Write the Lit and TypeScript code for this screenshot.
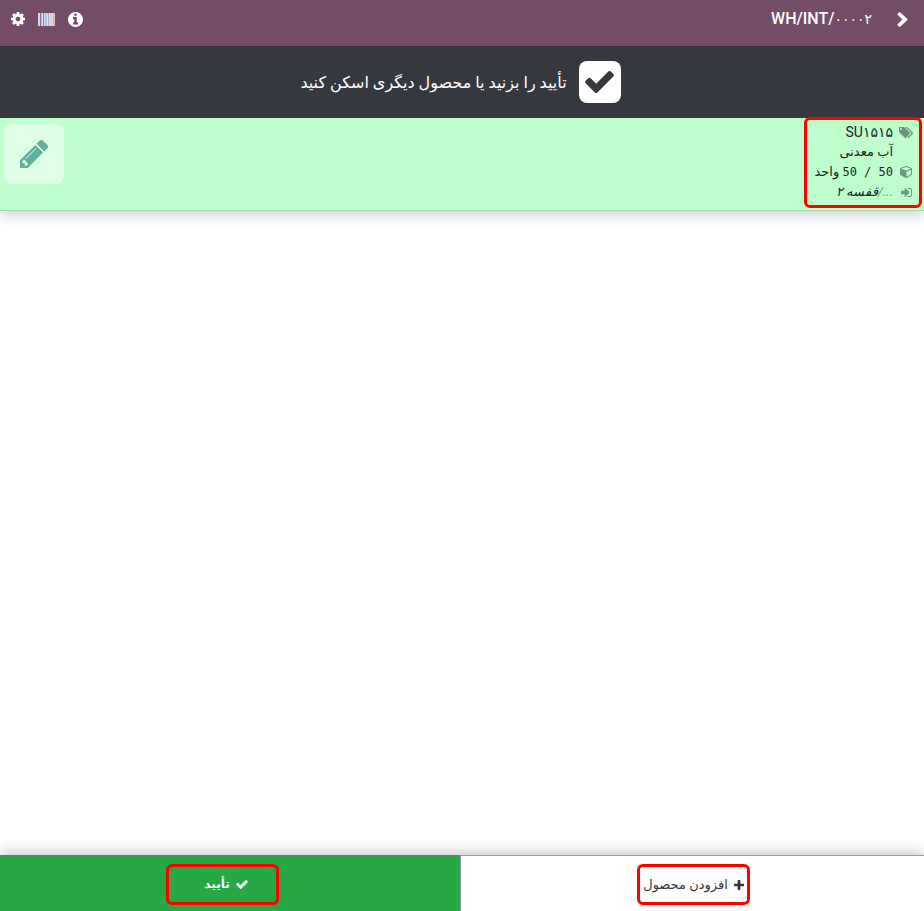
import { LitElement, html, svg, css } from "lit";
import { customElement, property } from "lit/decorators.js";

type Glyph = { box: string; d: string };

const GLYPHS: Record<string, Glyph> = {
  check: {
    box: "121 334 1550 1188",
    d: "M1671 566q0 40-28 68l-724 724-136 136q-28 28-68 28t-68-28l-136-136-362-362q-28-28-28-68t28-68l136-136q28-28 68-28t68 28l294 295 656-657q28-28 68-28t68 28l136 136q28 28 28 68z",
  },
  plus: {
    box: "192 128 1408 1408",
    d: "M1600 736v192q0 40-28 68t-68 28h-416v416q0 40-28 68t-68 28h-192q-40 0-68-28t-28-68v-416h-416q-40 0-68-28t-28-68v-192q0-40 28-68t68-28h416v-416q0-40 28-68t68-28h192q40 0 68 28t28 68v416h416q40 0 68 28t28 68z",
  },
  pencil: {
    box: "128 149 1515 1515",
    d: "M491 1536l91-91-235-235-91 91v107h128v128h107zm523-928q0-22-22-22-10 0-17 7l-542 542q-7 7-7 17 0 22 22 22 10 0 17-7l542-542q7-7 7-17zm-54-192l416 416-832 832h-416v-416zm683 96q0 53-37 90l-166 166-416-416 166-165q36-38 90-38 53 0 91 38l235 234q37 39 37 91z",
  },
  cog: {
    box: "128 128 1536 1536",
    d: "M1152 896q0-106-75-181t-181-75-181 75-75 181 75 181 181 75 181-75 75-181zm512-109v222q0 12-8 23t-20 13l-185 28q-19 54-39 91 35 50 107 138 10 12 10 25t-9 23q-27 37-99 108t-94 71q-12 0-26-9l-138-108q-44 23-91 38-16 136-29 186-7 28-36 28h-222q-14 0-24.500-8.500t-11.500-21.500l-28-184q-49-16-90-37l-141 107q-10 9-25 9-14 0-25-11-126-114-165-168-7-10-7-23 0-12 8-23 15-21 51-66.500t54-70.500q-27-50-41-99l-183-27q-13-2-21-12.500t-8-23.500v-222q0-12 8-23t19-13l186-28q14-46 39-92-40-57-107-138-10-12-10-24 0-10 9-23 26-36 98.500-107.500t94.500-71.500q13 0 26 10l138 107q44-23 91-38 16-136 29-186 7-28 36-28h222q14 0 24.500 8.500t11.500 21.500l28 184q49 16 90 37l142-107q9-9 24-9 13 0 25 10 129 119 165 170 7 8 7 22 0 12-8 23-15 21-51 66.500t-54 70.500q26 50 41 98l183 28q13 2 21 12.500t8 23.500z",
  },
  info: {
    box: "128 128 1536 1536",
    d: "M1152 1376v-160q0-14-9-23t-23-9h-96v-512q0-14-9-23t-23-9h-320q-14 0-23 9t-9 23v160q0 14 9 23t23 9h96v320h-96q-14 0-23 9t-9 23v160q0 14 9 23t23 9h448q14 0 23-9t9-23zm-128-896v-160q0-14-9-23t-23-9h-192q-14 0-23 9t-9 23v160q0 14 9 23t23 9h192q14 0 23-9t9-23zm640 416q0 209-103 385.500t-279.500 279.500-385.500 103-385.500-103-279.500-279.500-103-385.500 103-385.500 279.500-279.500 385.500-103 385.500 103 279.500 279.500 103 385.500z",
  },
  chevron: {
    box: "346 116 1036 1522",
    d: "M1363 922l-742 697q-19 19-45 19t-45-19l-166-166q-19-19-19-45t19-45l486-486-486-486q-19-19-19-45t19-45l166-166q19-19 45-19t45 19l742 697q19 19 19 45t-19 45z",
  },
  tags: {
    box: "64 192 1835 1451",
    d: "M448 448q0-53-37.500-90.500t-90.500-37.500-90.500 37.500-37.500 90.500 37.500 90.500 90.500 37.500 90.500-37.500 37.500-90.500zm1067 576q0 53-37 90l-491 492q-39 37-91 37-53 0-90-37l-715-716q-38-37-64.500-101t-26.500-117v-416q0-52 38-90t90-38h416q53 0 117 26.500t102 64.500l715 714q37 39 37 91zm384 0q0 53-37 90l-491 492q-39 37-91 37-36 0-59-14t-53-45l470-470q37-37 37-90 0-52-37-91l-715-714q-38-38-102-64.500t-117-26.500h224q53 0 117 26.500t102 64.500l715 714q37 39 37 91z",
  },
  cube: {
    box: "0 128 1664 1664",
    d: "M896 1629l640-349v-636l-640 233v752zm-64-865l698-254-698-254-698 254zm832-252v768q0 35-18 65t-49 47l-704 384q-28 16-61 16t-61-16l-704-384q-31-17-49-47t-18-65v-768q0-40 23-73t61-47l704-256q22-8 44-8t44 8l704 256q38 14 61 47t23 73z",
  },
  enter: {
    box: "128 256 1536 1280",
    d: "M1312 896q0 26-19 45l-544 544q-19 19-45 19t-45-19-19-45v-288h-448q-26 0-45-19t-19-45v-384q0-26 19-45t45-19h448v-288q0-26 19-45t45-19 45 19l544 544q19 19 19 45zm352-352v704q0 119-84.500 203.500t-203.500 84.500h-320q-13 0-22.500-9.500t-9.500-22.500q0-4-1-20t-.5-26.500 3-23.500 10-19.500 20.500-6.500h320q66 0 113-47t47-113v-704q0-66-47-113t-113-47h-312l-11.500-1-11.500-3-8-5.500-7-9-2-13.500q0-4-1-20t-.5-26.500 3-23.500 10-19.500 20.500-6.500h320q119 0 203.500 84.500t84.500 203.500z",
  },
};

const icon = (name: string) => html`<svg class="icon ${name}" viewBox=${GLYPHS[name].box} aria-hidden="true">
  <path fill="currentColor" d=${GLYPHS[name].d}></path>
</svg>`;

/** Bars of the barcode glyph: x position, width and tint. */
const BARS: [number, number, string][] = [
  [0, 1, "#b9d9ee"],
  [1, 1, "#efd5d5"],
  [2, 1, "#8a6a9c"],
  [3, 1, "#c9b4e0"],
  [4, 1, "#f3dfd2"],
  [5, 1, "#8f7fb0"],
  [6, 1, "#c4dcf2"],
  [7, 1, "#d8b6b4"],
  [8, 1, "#a8c6ea"],
  [9, 1, "#eee0cd"],
  [10, 1, "#b9b0de"],
  [11, 4, "#dcd3df"],
  [15, 1, "#a5c8ea"],
  [16, 1, "#e2b9ae"],
];

@customElement("scan-line")
export class ScanLine extends LitElement {
  @property() code = "";
  @property() product = "";
  @property() quantity = "";
  @property() unit = "";
  @property() destination = "";

  static styles = css`
    :host {
      display: flex;
      justify-content: space-between;
      align-items: flex-start;
      background: #bffecd;
      border-bottom: 1px solid #a0dcb0;
      box-shadow: 0 4px 12px rgba(53, 56, 80, 0.24);
    }
    .details {
      box-sizing: border-box;
      width: 118px;
      margin: -1px 2px 2px 0;
      padding: 2px 6px 3px 0;
      border: 3px solid #ff0000;
      border-radius: 6px;
      position: relative;
    }
    .row {
      display: grid;
      grid-template-columns: 14px 1fr;
      column-gap: 6px;
      align-items: center;
      height: 20px;
      font-size: 13px;
      line-height: 20px;
      white-space: nowrap;
    }
    .code {
      font-size: 14px;
    }
    .qty {
      font: 12px "DejaVu Sans Mono", monospace;
    }
    .dest {
      font-style: italic;
    }
    .muted {
      color: #6f9a82;
    }
    .icon {
      display: block;
      color: #6b957c;
      justify-self: center;
    }
    .tags {
      width: 14px;
      height: 11px;
    }
    .cube {
      width: 12px;
      height: 12px;
    }
    .enter {
      width: 11px;
      height: 9px;
    }
    .edit {
      display: grid;
      place-items: center;
      width: 60px;
      height: 60px;
      margin: 6px 0 0 4px;
      padding: 0;
      border: 0;
      border-radius: 8px;
      background: #dffee6;
      color: #5fb09c;
    }
    .pencil {
      width: 28px;
      height: 28px;
      color: inherit;
    }
  `;

  render() {
    return html`
      <div class="details">
        <div class="row">
          ${icon("tags")}
          <span class="code"><bdi dir="ltr">${this.code}</bdi></span>
        </div>
        <div class="row"><span></span><span>${this.product}</span></div>
        <div class="row">
          ${icon("cube")}
          <span><span class="qty" dir="ltr">${this.quantity}</span> ${this.unit}</span>
        </div>
        <div class="row">
          ${icon("enter")}
          <span class="dest"><span class="muted">.../</span>${this.destination}</span>
        </div>
      </div>
      <button class="edit" aria-label="ویرایش">${icon("pencil")}</button>
    `;
  }
}

@customElement("app-root")
export class AppRoot extends LitElement {
  static styles = css`
    :host {
      display: flex;
      flex-direction: column;
      min-height: 100vh;
      direction: rtl;
      background: #fff;
      color: #212529;
      font-family: Roboto, "DejaVu Sans", sans-serif;
    }
    button {
      font: inherit;
      color: inherit;
      background: none;
      border: 0;
      padding: 0;
    }
    .icon {
      display: block;
      flex: none;
    }
    .top {
      display: flex;
      align-items: center;
      justify-content: space-between;
      box-sizing: border-box;
      height: 46px;
      padding: 0 16px 8px 11px;
      background: #734d68;
      color: #fff;
    }
    .trail {
      display: flex;
      align-items: center;
      gap: 25px;
    }
    .title {
      margin: 0;
      font-size: 16px;
      font-weight: 500;
      line-height: 24px;
    }
    .digits {
      font-size: 14px;
      font-weight: 400;
    }
    .chevron {
      width: 11px;
      height: 15px;
    }
    .tools {
      display: flex;
      direction: ltr;
      align-items: center;
      gap: 13px;
    }
    .cog {
      width: 14px;
      height: 14px;
    }
    .info {
      width: 15px;
      height: 15px;
    }
    .barcode {
      display: block;
      width: 17px;
      height: 13px;
    }
    .message {
      position: relative;
      z-index: 1;
      display: flex;
      align-items: center;
      justify-content: center;
      gap: 12px;
      height: 72px;
      padding-right: 3px;
      background: #363840;
      color: #fff;
      font-size: 16px;
    }
    .badge {
      display: grid;
      place-items: center;
      width: 42px;
      height: 42px;
      border-radius: 8px;
      background: #fff;
      color: #363840;
    }
    .badge .check {
      width: 29px;
      height: 22px;
    }
    main {
      position: relative;
      z-index: 2;
      flex: 1;
      clip-path: inset(-1px 0 0 0);
    }
    .actions {
      display: grid;
      grid-template-columns: 464fr 460fr;
      height: 56px;
      box-shadow: 0 -4px 12px rgba(53, 56, 80, 0.24);
    }
    .action {
      display: grid;
      place-items: center;
      padding-top: 2px;
      font-size: 13px;
    }
    .add {
      padding-left: 2px;
      background: #fff;
      border-top: 1px solid #9a9ca5;
      border-left: 1px solid #9a9ca5;
      color: #33363e;
    }
    .confirm {
      padding-right: 16px;
      background: #28a745;
      color: #fff;
      font-size: 12px;
      font-weight: 700;
    }
    .mark {
      display: flex;
      align-items: center;
      justify-content: center;
      gap: 6px;
      box-sizing: border-box;
      width: 113px;
      height: 41px;
      border: 3px solid #ff0000;
      border-radius: 6px;
      white-space: nowrap;
    }
    .confirm .mark {
      padding-left: 8px;
    }
    .mark .check {
      width: 12px;
      height: 9px;
    }
    .plus {
      width: 10px;
      height: 10px;
    }
  `;

  render() {
    return html`
      <header class="top">
        <div class="trail">
          <button aria-label="بازگشت">${icon("chevron")}</button>
          <h1 class="title"><bdi dir="ltr">WH/INT/<span class="digits">۰۰۰۰۲</span></bdi></h1>
        </div>
        <nav class="tools">
          <button aria-label="تنظیمات">${icon("cog")}</button>
          <button aria-label="بارکد">
            <svg class="barcode" viewBox="0 0 17 13" shape-rendering="crispEdges" aria-hidden="true">
              ${BARS.map(([x, w, tint]) => svg`<rect x=${x} y="0" width=${w} height="13" fill=${tint}></rect>`)}
            </svg>
          </button>
          <button aria-label="اطلاعات">${icon("info")}</button>
        </nav>
      </header>
      <div class="message" role="status">
        <span class="badge">${icon("check")}</span>
        <span>تأیید را بزنید یا محصول دیگری اسکن کنید</span>
      </div>
      <main>
        <scan-line code="SU۱۵۱۵" product="آب معدنی" quantity="50 / 50" unit="واحد" destination="قفسه ۲"></scan-line>
      </main>
      <footer class="actions">
        <button class="action add"><span class="mark">${icon("plus")}<span>افزودن محصول</span></span></button>
        <button class="action confirm"><span class="mark">${icon("check")}<span>تأیید</span></span></button>
      </footer>
    `;
  }
}
